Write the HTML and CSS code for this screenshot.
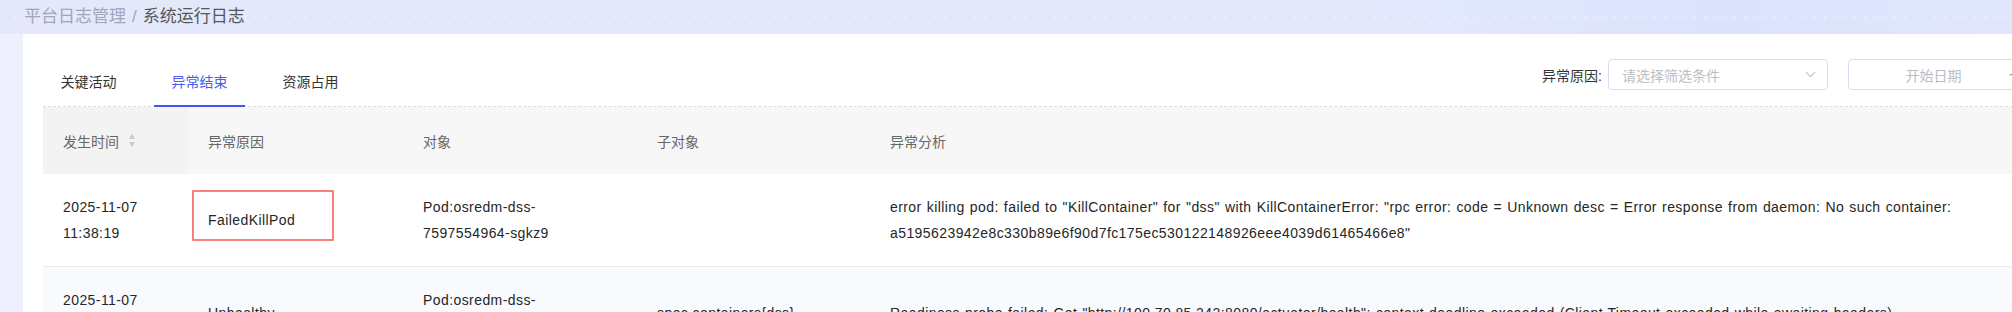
FILE: index.html
```html
<!DOCTYPE html>
<html lang="zh-CN">
<head>
<meta charset="utf-8">
<title>系统运行日志</title>
<link rel="stylesheet" href="styles.css">
</head>
<body>
<div class="page">
  <div class="breadcrumb">
    <span class="crumb-parent">平台日志管理</span>
    <span class="crumb-sep">/</span>
    <span class="crumb-current">系统运行日志</span>
  </div>
  <div class="card">
    <div class="toolbar">
      <div class="tabs">
        <div class="tab">关键活动</div>
        <div class="tab active">异常结束</div>
        <div class="tab">资源占用</div>
      </div>
      <div class="filters">
        <label class="filter-label">异常原因:</label>
        <div class="select">
          <span class="placeholder">请选择筛选条件</span>
          <svg class="chevron" width="11" height="7" viewBox="0 0 11 7"><path d="M0.8 0.8 L5.5 5.6 L10.2 0.8" fill="none" stroke="#c0c4cc" stroke-width="1.1"/></svg>
        </div>
        <div class="daterange">
          <span class="date-input">开始日期</span>
          <span class="range-sep">~</span>
          <span class="date-input">结束日期</span>
        </div>
      </div>
    </div>
    <table class="grid">
      <colgroup>
        <col class="c-time"><col class="c-reason"><col class="c-obj"><col class="c-sub"><col class="c-msg">
      </colgroup>
      <thead>
        <tr>
          <th class="sorted"><span class="th-inner">发生时间<span class="sorter"><i class="up"></i><i class="down"></i></span></span></th>
          <th>异常原因</th>
          <th>对象</th>
          <th>子对象</th>
          <th>异常分析</th>
        </tr>
      </thead>
      <tbody>
        <tr>
          <td>2025-11-07 11:38:19</td>
          <td class="reason">FailedKillPod<span class="mark"></span></td>
          <td>Pod:osredm-dss-<br>7597554964-sgkz9</td>
          <td></td>
          <td>error killing pod: failed to "KillContainer" for "dss" with KillContainerError: "rpc error: code = Unknown desc = Error response from daemon: No such container: a5195623942e8c330b89e6f90d7fc175ec530122148926eee4039d61465466e8"</td>
        </tr>
        <tr class="alt">
          <td>2025-11-07 11:36:52</td>
          <td>Unhealthy</td>
          <td>Pod:osredm-dss-<br>7597554964-sgkz9</td>
          <td>spec.containers{dss}</td>
          <td>Readiness probe failed: Get "http://100.70.85.242:8080/actuator/health": context deadline exceeded (Client.Timeout exceeded while awaiting headers)</td>
        </tr>
      </tbody>
    </table>
  </div>
</div>
</body>
</html>
```
FILE: styles.css
```css
html, body {
  margin: 0;
  padding: 0;
  width: 2012px;
  height: 312px;
  overflow: hidden;
}
body {
  font-family: "Liberation Sans", "Noto Sans CJK SC", sans-serif;
  font-size: 14px;
  color: #262626;
  background: #eef0fd;
}
.page {
  width: 2300px;
  min-height: 312px;
  background:
    radial-gradient(circle, rgba(255,255,255,0.35) 0.8px, transparent 1.2px) 0 0 / 10px 10px,
    linear-gradient(90deg, #e5e8fb 0%, #e3e8fc 60%, #dbe4fd 75%, #e6eafc 100%);
  background-repeat: repeat-x, no-repeat;
  background-size: 10px 34px, 100% 34px;
  background-color: #eef0fd;
}
.breadcrumb {
  height: 34px;
  padding-left: 24px;
  display: flex;
  align-items: center;
  gap: 6px;
  font-size: 17px;
  line-height: 20px;
  box-sizing: border-box;
}
.crumb-parent, .crumb-sep { color: #a2a6b6; }
.crumb-current { color: #555659; }
.card {
  margin-left: 23px;
  width: 2135px;
  background: #fff;
  padding: 23px 20px 0;
  min-height: 278px;
}
.toolbar {
  display: flex;
  justify-content: space-between;
  align-items: flex-start;
  border-bottom: 1px dashed #dcdde0;
}
.tabs {
  display: flex;
  gap: 20px;
}
.tab {
  position: relative;
  width: 91px;
  height: 49px;
  line-height: 50px;
  text-align: center;
  color: #333;
  font-size: 14px;
}
.tab.active { color: #4b5cf0; }
.tab.active::after {
  content: "";
  position: absolute;
  left: 0;
  right: 0;
  bottom: -1px;
  height: 2px;
  background: #4455ee;
}
.filters {
  display: flex;
  align-items: center;
  margin-top: 2px;
}
.filter-label {
  color: #333;
  margin-right: 6px;
}
.select {
  width: 220px;
  height: 31px;
  box-sizing: border-box;
  border: 1px solid #dcdcee;
  border-radius: 4px;
  display: flex;
  align-items: center;
  justify-content: space-between;
  padding: 0 11px 0 13px;
  margin-right: 20px;
}
.placeholder { color: #bdbec4; }
.daterange {
  width: 330px;
  height: 31px;
  box-sizing: border-box;
  border: 1px solid #dcdcee;
  border-radius: 4px;
  display: flex;
  align-items: center;
  padding: 0 10px;
  color: #bdbec4;
}
.date-input { flex: 1; text-align: center; }
.range-sep { width: 10px; color: #888; text-align: center; }
.grid {
  width: 100%;
  border-collapse: collapse;
  table-layout: fixed;
}
.c-time { width: 145px; }
.c-reason { width: 215px; }
.c-obj { width: 234px; }
.c-sub { width: 233px; }
th {
  height: 67px;
  padding: 0 20px;
  text-align: left;
  font-weight: normal;
  color: #666;
  background: #f7f7f7;
}
th.sorted { background: #f3f3f3; }
.th-inner {
  display: inline-flex;
  align-items: center;
}
.sorter {
  display: inline-flex;
  flex-direction: column;
  gap: 3px;
  margin-left: 10px;
}
.sorter i {
  width: 0;
  height: 0;
  border-left: 3.5px solid transparent;
  border-right: 3.5px solid transparent;
}
.sorter .up { border-bottom: 5px solid #c8cad0; }
.sorter .down { border-top: 5px solid #c8cad0; }
td {
  height: 92px;
  padding: 0 20px;
  line-height: 26px;
  letter-spacing: 0.42px;
  word-spacing: 0.8px;
  vertical-align: middle;
  border-bottom: 1px solid #ebebeb;
  color: #262626;
  word-wrap: break-word;
}
tr.alt td { background: #f9fafe; }
td.reason { position: relative; }
.mark {
  position: absolute;
  left: 4px;
  top: 16px;
  width: 142px;
  height: 51px;
  box-sizing: border-box;
  border: 2px solid #f5817b;
  border-radius: 1px;
}
```
